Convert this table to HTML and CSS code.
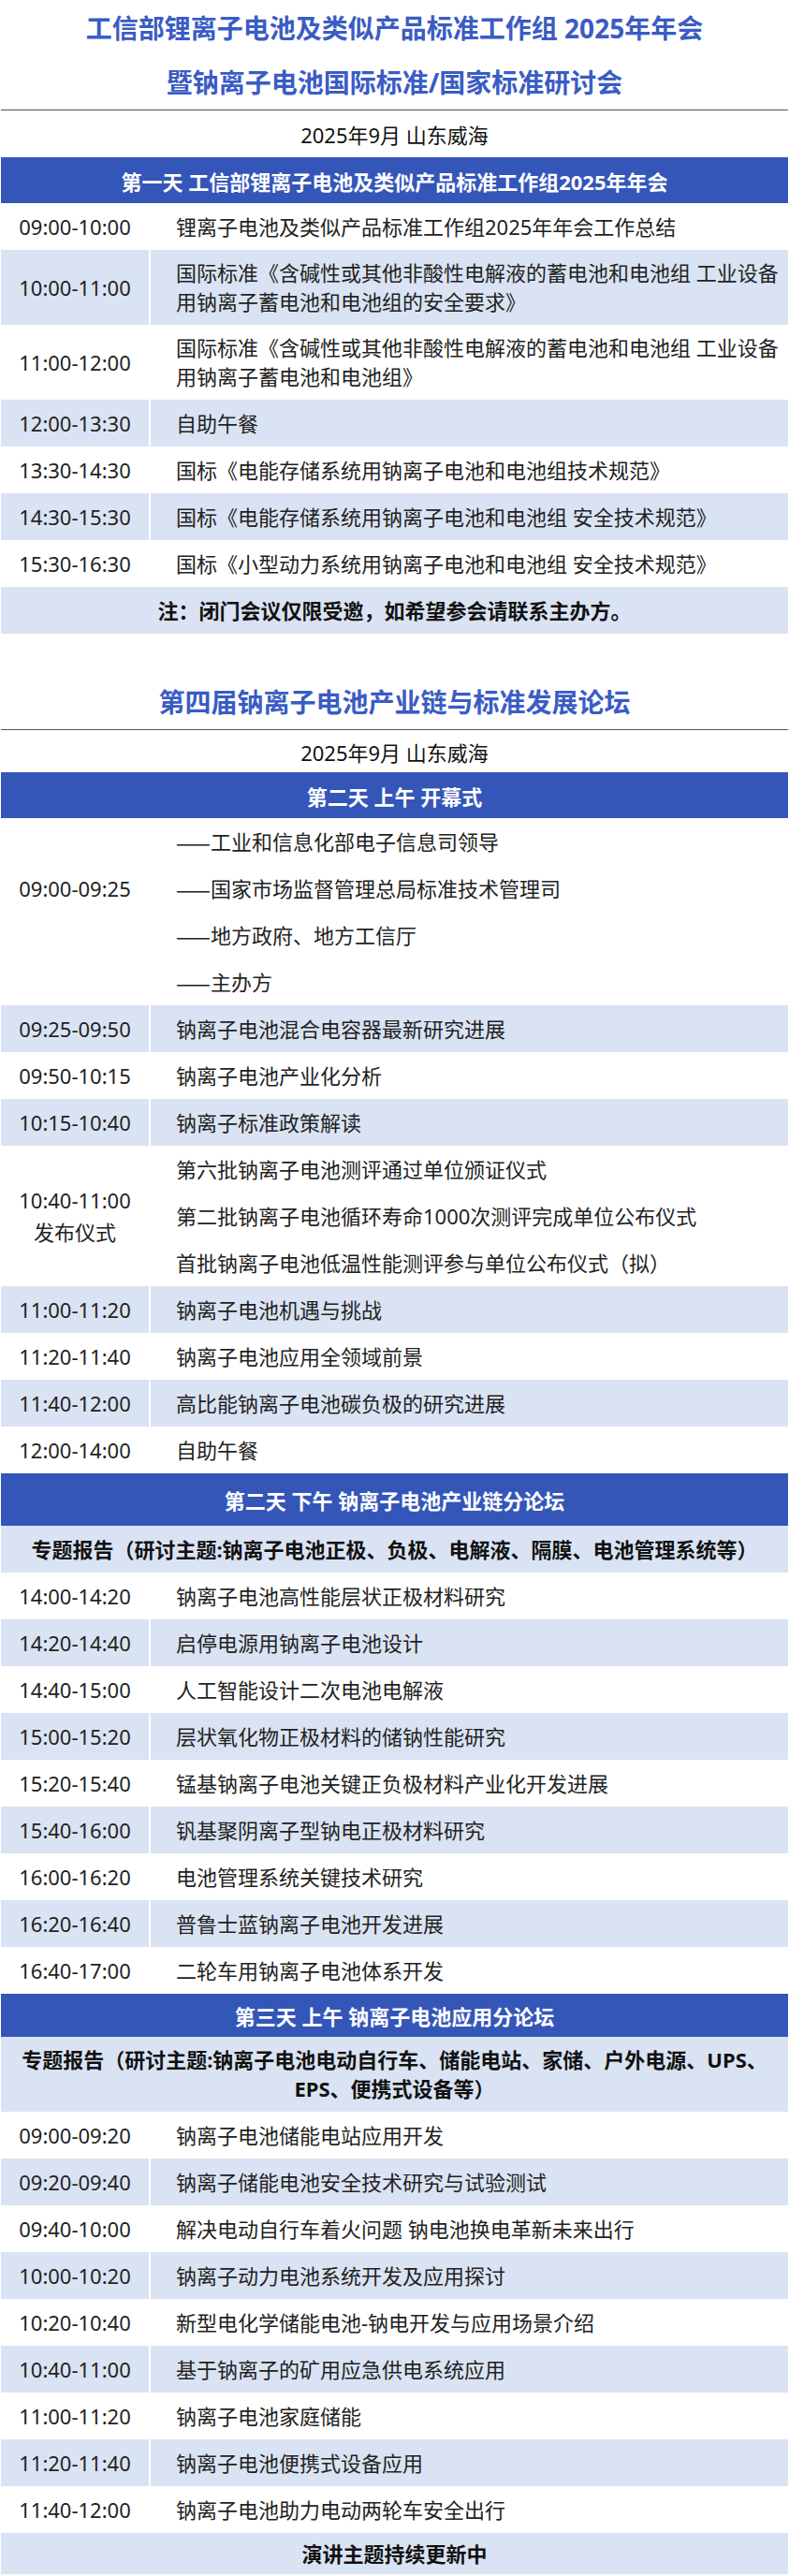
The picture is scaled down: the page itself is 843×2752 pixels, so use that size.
FILE: index.html
```html
<!DOCTYPE html>
<html lang="zh-CN">
<head>
<meta charset="utf-8">
<title>会议日程</title>
<link rel="stylesheet" href="styles.css">
</head>
<body>
<div class="page">

  <section class="block">
    <div class="title-group">
      <h1 class="title">工信部锂离子电池及类似产品标准工作组 2025年年会</h1>
      <h1 class="title">暨钠离子电池国际标准/国家标准研讨会</h1>
    </div>
    <div class="rule"></div>
    <div class="date">2025年9月 山东威海</div>
    <div class="sched">
      <div class="band">第一天 工信部锂离子电池及类似产品标准工作组2025年年会</div>
      <div class="row"><div class="t">09:00-10:00</div><div class="c">锂离子电池及类似产品标准工作组2025年年会工作总结</div></div>
      <div class="row alt"><div class="t">10:00-11:00</div><div class="c">国际标准《含碱性或其他非酸性电解液的蓄电池和电池组 工业设备用钠离子蓄电池和电池组的安全要求》</div></div>
      <div class="row"><div class="t">11:00-12:00</div><div class="c">国际标准《含碱性或其他非酸性电解液的蓄电池和电池组 工业设备用钠离子蓄电池和电池组》</div></div>
      <div class="row alt"><div class="t">12:00-13:30</div><div class="c">自助午餐</div></div>
      <div class="row"><div class="t">13:30-14:30</div><div class="c">国标《电能存储系统用钠离子电池和电池组技术规范》</div></div>
      <div class="row alt"><div class="t">14:30-15:30</div><div class="c">国标《电能存储系统用钠离子电池和电池组 安全技术规范》</div></div>
      <div class="row"><div class="t">15:30-16:30</div><div class="c">国标《小型动力系统用钠离子电池和电池组 安全技术规范》</div></div>
      <div class="wide alt">注：闭门会议仅限受邀，如希望参会请联系主办方。</div>
    </div>
  </section>

  <section class="block block--next">
    <div class="title-group">
      <h1 class="title">第四届钠离子电池产业链与标准发展论坛</h1>
    </div>
    <div class="rule"></div>
    <div class="date date--short">2025年9月 山东威海</div>
    <div class="sched">
      <div class="band">第二天 上午 开幕式</div>
      <div class="row">
        <div class="t t--second"><span class="t-line">09:00-09:25</span></div>
        <div class="c c--lines">
          <div class="line"><span class="dash">——</span>工业和信息化部电子信息司领导</div>
          <div class="line"><span class="dash">——</span>国家市场监督管理总局标准技术管理司</div>
          <div class="line"><span class="dash">——</span>地方政府、地方工信厅</div>
          <div class="line"><span class="dash">——</span>主办方</div>
        </div>
      </div>
      <div class="row alt"><div class="t">09:25-09:50</div><div class="c">钠离子电池混合电容器最新研究进展</div></div>
      <div class="row"><div class="t">09:50-10:15</div><div class="c">钠离子电池产业化分析</div></div>
      <div class="row alt"><div class="t">10:15-10:40</div><div class="c">钠离子标准政策解读</div></div>
      <div class="row">
        <div class="t t--stack">10:40-11:00<br>发布仪式</div>
        <div class="c c--lines">
          <div class="line">第六批钠离子电池测评通过单位颁证仪式</div>
          <div class="line">第二批钠离子电池循环寿命1000次测评完成单位公布仪式</div>
          <div class="line">首批钠离子电池低温性能测评参与单位公布仪式（拟）</div>
        </div>
      </div>
      <div class="row alt"><div class="t">11:00-11:20</div><div class="c">钠离子电池机遇与挑战</div></div>
      <div class="row"><div class="t">11:20-11:40</div><div class="c">钠离子电池应用全领域前景</div></div>
      <div class="row alt"><div class="t">11:40-12:00</div><div class="c">高比能钠离子电池碳负极的研究进展</div></div>
      <div class="row"><div class="t">12:00-14:00</div><div class="c">自助午餐</div></div>

      <div class="band band--tall">第二天 下午 钠离子电池产业链分论坛</div>
      <div class="wide alt">专题报告（研讨主题:钠离子电池正极、负极、电解液、隔膜、电池管理系统等）</div>
      <div class="row"><div class="t">14:00-14:20</div><div class="c">钠离子电池高性能层状正极材料研究</div></div>
      <div class="row alt"><div class="t">14:20-14:40</div><div class="c">启停电源用钠离子电池设计</div></div>
      <div class="row"><div class="t">14:40-15:00</div><div class="c">人工智能设计二次电池电解液</div></div>
      <div class="row alt"><div class="t">15:00-15:20</div><div class="c">层状氧化物正极材料的储钠性能研究</div></div>
      <div class="row"><div class="t">15:20-15:40</div><div class="c">锰基钠离子电池关键正负极材料产业化开发进展</div></div>
      <div class="row alt"><div class="t">15:40-16:00</div><div class="c">钒基聚阴离子型钠电正极材料研究</div></div>
      <div class="row"><div class="t">16:00-16:20</div><div class="c">电池管理系统关键技术研究</div></div>
      <div class="row alt"><div class="t">16:20-16:40</div><div class="c">普鲁士蓝钠离子电池开发进展</div></div>
      <div class="row"><div class="t">16:40-17:00</div><div class="c">二轮车用钠离子电池体系开发</div></div>

      <div class="band band--short">第三天 上午 钠离子电池应用分论坛</div>
      <div class="wide alt wide--wrap">专题报告（研讨主题:钠离子电池电动自行车、储能电站、家储、户外电源、UPS、EPS、便携式设备等）</div>
      <div class="row"><div class="t">09:00-09:20</div><div class="c">钠离子电池储能电站应用开发</div></div>
      <div class="row alt"><div class="t">09:20-09:40</div><div class="c">钠离子储能电池安全技术研究与试验测试</div></div>
      <div class="row"><div class="t">09:40-10:00</div><div class="c">解决电动自行车着火问题 钠电池换电革新未来出行</div></div>
      <div class="row alt"><div class="t">10:00-10:20</div><div class="c">钠离子动力电池系统开发及应用探讨</div></div>
      <div class="row"><div class="t">10:20-10:40</div><div class="c">新型电化学储能电池-钠电开发与应用场景介绍</div></div>
      <div class="row alt"><div class="t">10:40-11:00</div><div class="c">基于钠离子的矿用应急供电系统应用</div></div>
      <div class="row"><div class="t">11:00-11:20</div><div class="c">钠离子电池家庭储能</div></div>
      <div class="row alt"><div class="t">11:20-11:40</div><div class="c">钠离子电池便携式设备应用</div></div>
      <div class="row"><div class="t">11:40-12:00</div><div class="c">钠离子电池助力电动两轮车安全出行</div></div>
      <div class="wide alt wide--short">演讲主题持续更新中</div>
    </div>
  </section>

</div>
</body>
</html>
```

FILE: styles.css
```css
* {
  box-sizing: border-box;
}

body {
  margin: 0;
  background: #ffffff;
  font-family: "Noto Sans", "Noto Sans CJK SC", sans-serif;
  color: #222222;
}

.page {
  width: 843px;
  padding-bottom: 2px;
}

.block--next {
  margin-top: 44px;
}

.title-group {
  padding-top: 1px;
  text-align: center;
}

.title {
  margin: 0;
  font-size: 28px;
  line-height: 58px;
  font-weight: 700;
  color: #3a5cc4;
}

.block--next .title-group {
  padding-top: 0;
}

.rule {
  height: 1px;
  margin: 0 1px;
  background: #44546a;
}

.date {
  height: 50px;
  display: flex;
  align-items: center;
  justify-content: center;
  font-size: 22px;
  color: #111111;
}

.date--short {
  height: 45px;
}

.sched {
  padding: 0 1px;
}

.band {
  height: 49px;
  display: flex;
  align-items: center;
  justify-content: center;
  background: #3456b9;
  color: #ffffff;
  font-size: 22px;
  font-weight: 700;
}

.band--tall {
  height: 56px;
}

.band--short {
  height: 46px;
}

.row {
  display: grid;
  grid-template-columns: 158px 1fr;
  column-gap: 2px;
  min-height: 50px;
  font-size: 22px;
  line-height: 31px;
}

.t,
.c {
  display: flex;
  align-items: center;
}

.t {
  justify-content: center;
  text-align: center;
}

.c {
  padding: 9px 4px 9px 27px;
}

.alt .t,
.alt .c {
  background: #dae3f3;
}

.t--second {
  align-items: flex-start;
  padding-top: 50px;
}

.t-line {
  line-height: 50px;
}

.t--stack {
  line-height: 34px;
}

.c--lines {
  flex-direction: column;
  align-items: stretch;
  padding: 0 4px 0 27px;
}

.line {
  height: 50px;
  display: flex;
  align-items: center;
}

.dash {
  font-family: "Noto Sans CJK SC", sans-serif;
}

.wide {
  min-height: 50px;
  display: flex;
  align-items: center;
  justify-content: center;
  text-align: center;
  padding: 9px 12px;
  font-size: 22px;
  line-height: 31px;
  font-weight: 700;
  color: #111111;
}

.wide.alt {
  background: #dae3f3;
}

.wide--short {
  min-height: 44px;
  padding: 6px 12px;
}
```
